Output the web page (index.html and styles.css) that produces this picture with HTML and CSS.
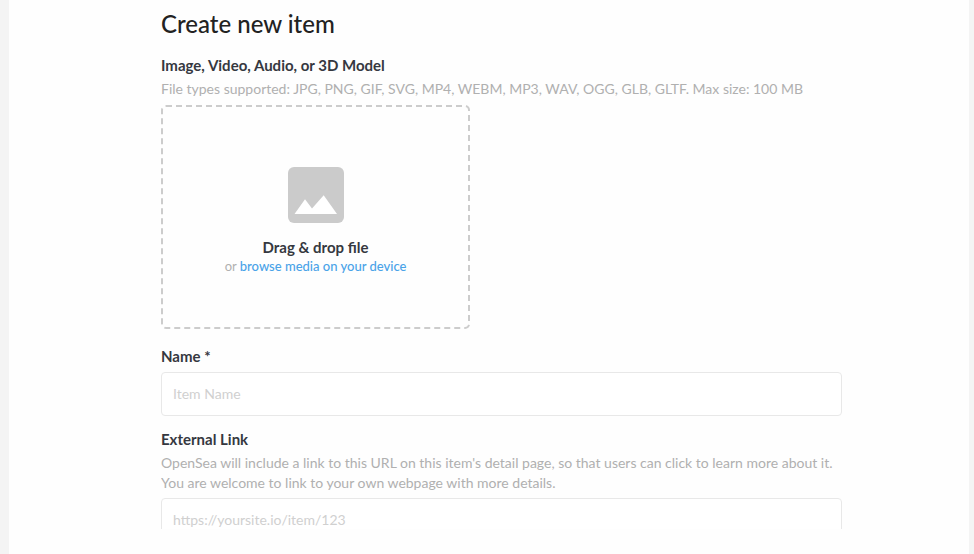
FILE: index.html
```html
<!DOCTYPE html>
<html lang="en">
<head>
<meta charset="utf-8">
<meta name="viewport" content="width=device-width, initial-scale=1">
<title>Create new item</title>
<link rel="stylesheet" href="styles.css">
</head>
<body>
<main class="page">
  <form class="form">
    <h1 class="title">Create new item</h1>

    <section class="field field-media">
      <h2 class="label">Image, Video, Audio, or 3D Model</h2>
      <p class="hint">File types supported: JPG, PNG, GIF, SVG, MP4, WEBM, MP3, WAV, OGG, GLB, GLTF. Max size: 100 MB</p>
      <div class="dropzone">
        <svg class="picture" viewBox="0 0 56 56" aria-hidden="true">
          <rect width="56" height="56" rx="6" fill="#cbcbcb"/>
          <path d="M6.500 47 17 32.300 24 41.500 35.700 28.300 49 47Z" fill="#fff"/>
        </svg>
        <p class="drop-title">Drag &amp; drop file</p>
        <p class="drop-text">or <a class="browse" href="#">browse media on your device</a></p>
      </div>
    </section>

    <div class="field field-name">
      <label class="label" for="name">Name *</label>
      <input class="input" id="name" type="text" placeholder="Item Name">
    </div>

    <div class="field field-link">
      <label class="label" for="link">External Link</label>
      <p class="hint">OpenSea will include a link to this URL on this item's detail page, so that users can click to learn more about it. You are welcome to link to your own webpage with more details.</p>
      <input class="input" id="link" type="url" placeholder="https://yoursite.io/item/123">
    </div>
  </form>
</main>
</body>
</html>
```
FILE: styles.css
```css
* {
  box-sizing: border-box;
}

body {
  margin: 0;
  padding: 0 5px 0 9px;
  background: #f4f4f4;
  color: #353840;
  font-family: Lato, "Open Sans", sans-serif;
  font-size: 14px;
  line-height: 20px;
}

h1, h2, p {
  margin: 0;
}

.page {
  height: 100vh;
  padding: 0 127px 25px 152px;
  background: #fefefe;
}

.form {
  display: flex;
  flex-direction: column;
  height: 100%;
  padding-top: 8px;
  overflow: hidden;
}

.title {
  color: #222;
  font-size: 24px;
  font-weight: 500;
  line-height: 32px;
}

.field {
  display: flex;
  flex: none;
  flex-direction: column;
}

.field-media {
  margin-top: 15px;
}

.field-name {
  margin-top: 17px;
}

.field-link {
  margin-top: 13px;
}

.label {
  font-size: 15px;
  font-weight: 700;
  line-height: 20px;
}

.hint {
  margin-top: 4px;
  color: #b0b0b0;
}

.dropzone {
  display: flex;
  flex-direction: column;
  align-items: center;
  justify-content: center;
  width: 309px;
  max-width: 100%;
  height: 224px;
  margin-top: 6px;
  padding-top: 8px;
  border: 2px dashed #ccc;
  border-radius: 5px;
}

.picture {
  width: 56px;
  height: 56px;
}

.drop-title {
  margin-top: 14px;
  font-size: 15px;
  font-weight: 700;
}

.drop-text {
  color: #b0b0b0;
  font-size: 13px;
  line-height: 18px;
}

.browse {
  color: #4aa3e8;
  font-weight: 500;
  text-decoration: none;
}

.input {
  width: 100%;
  height: 44px;
  margin-top: 5px;
  padding: 0 11px 2px;
  border: 1px solid #e8e8e8;
  border-radius: 4px;
  background: #fff;
  color: #353840;
  font: inherit;
}

.label + .input {
  margin-top: 6px;
}

.input::placeholder {
  color: #d0d0d0;
}
```
